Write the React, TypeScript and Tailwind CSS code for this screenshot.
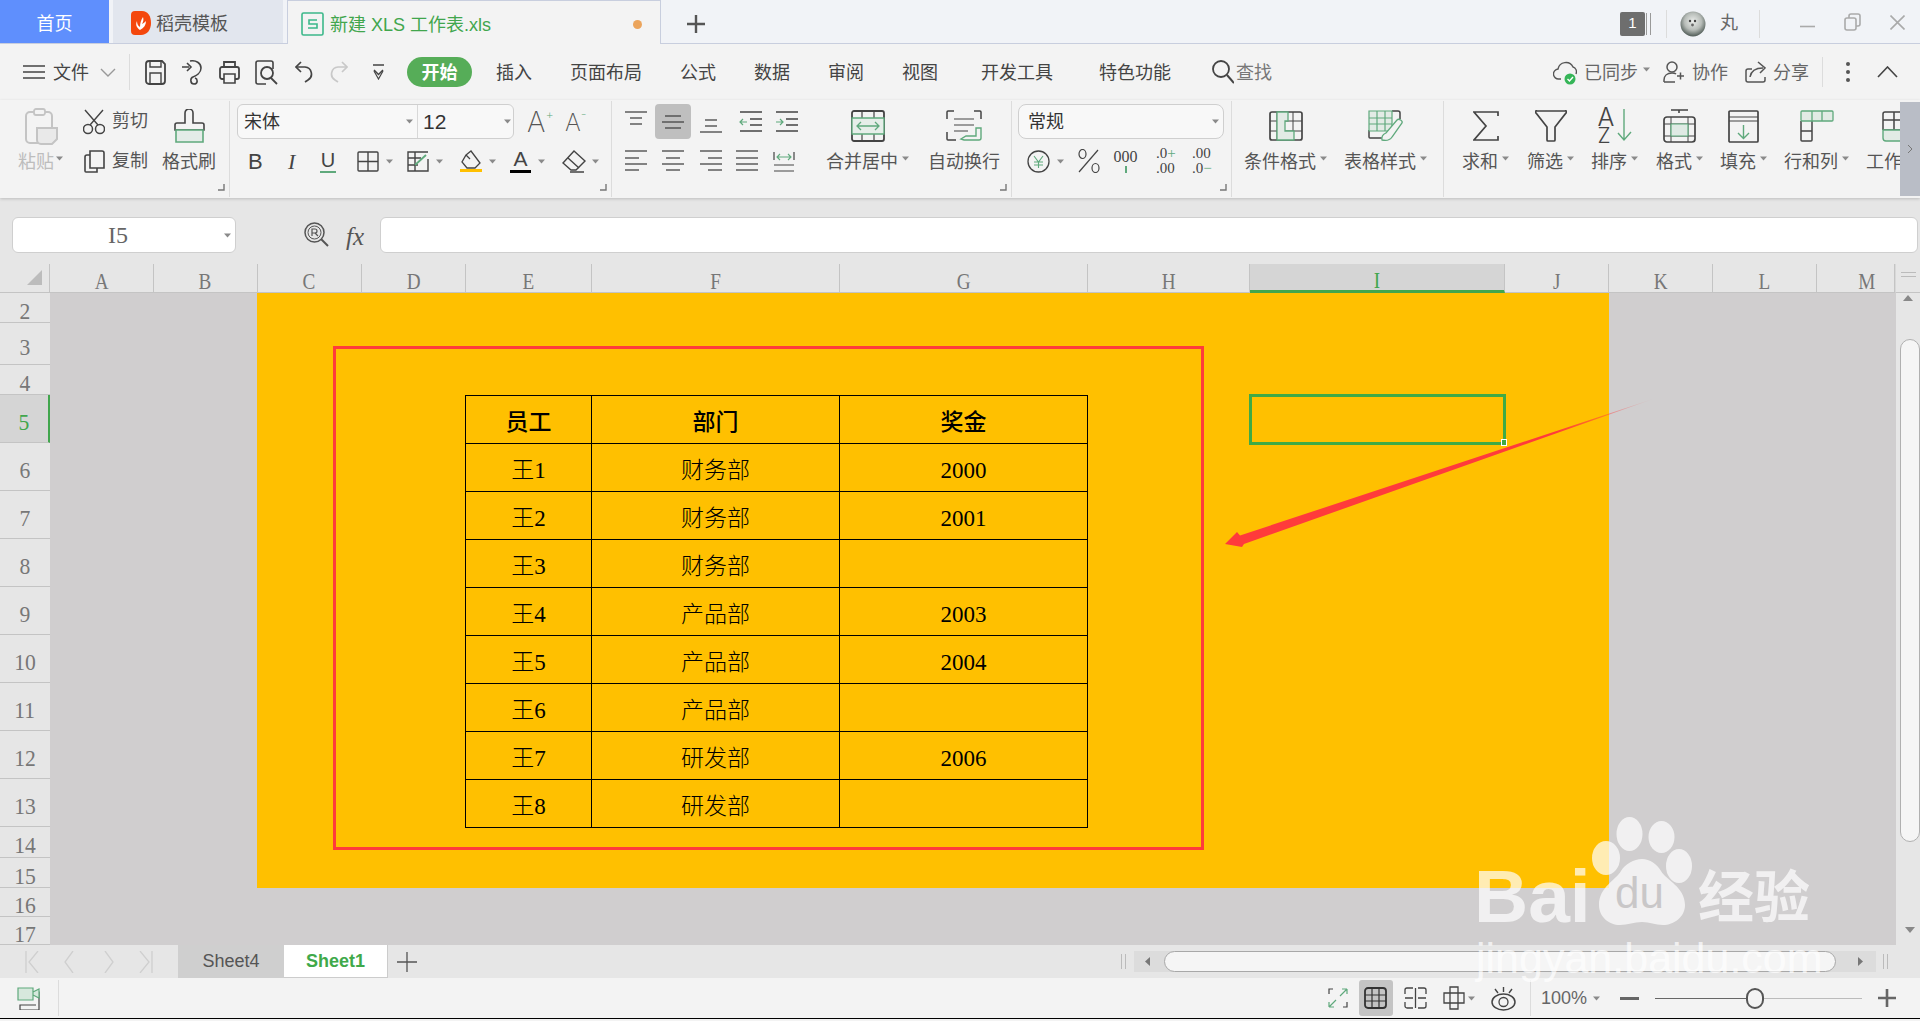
import React from 'react';

const UI = { fontFamily: '"Liberation Sans", "Noto Sans CJK SC", sans-serif' };
const SONG = { fontFamily: '"Liberation Serif", "Noto Sans CJK SC", serif' };
const THIN = { fontFamily: 'Inter, "Liberation Sans", sans-serif' };

const GREEN = '#5fa97c';

const Ic: React.FC<{ w: number; h: number; className?: string; children: React.ReactNode }> = ({ w, h, className, children }) => (
  <svg width={w} height={h} viewBox={`0 0 ${w} ${h}`} fill="none" stroke="currentColor" strokeWidth={1.4} className={`shrink-0 ${className ?? 'text-[#444]'}`}>
    {children}
  </svg>
);

const Caret: React.FC<{ className?: string }> = ({ className }) => (
  <svg width={7} height={5} viewBox="0 0 7 5" className={`shrink-0 ${className ?? ''}`}>
    <path d="M0 0.5h7L3.5 4.5z" fill="#8a8a8a" />
  </svg>
);

const Sep: React.FC<{ className?: string }> = ({ className }) => <div className={`w-px bg-[#dcdcdc] shrink-0 ${className ?? ''}`} />;

const Corner = () => (
  <svg width={7} height={7} viewBox="0 0 7 7" className="absolute right-[4px] bottom-[6px]">
    <path d="M6 0v6H0" stroke="#777" strokeWidth={1.4} fill="none" />
  </svg>
);

const Big: React.FC<{ label: string; caret?: boolean; width: number; ml: number; children: React.ReactNode }> = ({ label, caret, width, ml, children }) => (
  <div className="flex flex-col items-center shrink-0" style={{ width, marginLeft: ml }}>
    <div className="h-[44px] flex items-center justify-center">{children}</div>
    <div className="h-[28px] flex items-center gap-[4px] whitespace-nowrap text-[18px] text-[#555]">
      <span>{label}</span>
      {caret && <Caret className="-mt-[8px]" />}
    </div>
  </div>
);

// top menu row icons
const IconMenu = () => <Ic w={22} h={16}><path d="M0 2h22M0 8h22M0 14h22" strokeWidth={1.6} /></Ic>;
const IconSave = () => (
  <Ic w={21} h={25}>
    <path d="M4 1h13l3 3v17a3 3 0 0 1-3 3H4a3 3 0 0 1-3-3V4a3 3 0 0 1 3-3z" strokeWidth={1.8} />
    <path d="M5 1v6h11V1M5 24V13h11v11" strokeWidth={1.4} />
  </Ic>
);
const IconRoute = () => (
  <Ic w={20} h={25}>
    <path d="M0 7h7M5 3l4 4-4 4M8 1c6-1 11 2 11 7s-5 8-8 9c-3 1-3 7 1 7s4-5 1-6" strokeWidth={1.6} />
  </Ic>
);
const IconPrint = () => (
  <Ic w={21} h={25}>
    <path d="M5 7V2h11v5M5 19H3a2 2 0 0 1-2-2V9a2 2 0 0 1 2-2h15a2 2 0 0 1 2 2v8a2 2 0 0 1-2 2h-2" strokeWidth={1.8} />
    <path d="M5 14h11v9H5z" strokeWidth={1.6} />
  </Ic>
);
const IconPreview = () => (
  <Ic w={23} h={25}>
    <path d="M11 24H3a2 2 0 0 1-2-2V3a2 2 0 0 1 2-2h13a2 2 0 0 1 2 2v6" strokeWidth={1.6} />
    <circle cx={12} cy={13} r={6} strokeWidth={1.8} />
    <path d="M16 18l6 6" strokeWidth={1.8} />
  </Ic>
);
const IconUndo = ({ cls }: { cls?: string }) => (
  <Ic w={18} h={22} className={cls}>
    <path d="M6 1L1 6l5 5" strokeWidth={1.7} />
    <path d="M1 6h9a7 7 0 0 1 3 13l-3 2" strokeWidth={1.7} />
  </Ic>
);
const IconDrop = () => (
  <Ic w={11} h={16}>
    <path d="M0 1h11M1 6l4.5 4.5L10 6" strokeWidth={1.5} />
    <path d="M1 7l4.5 8L10 7" strokeWidth={1.2} />
  </Ic>
);
const IconSearch = () => (
  <Ic w={22} h={24}>
    <circle cx={9} cy={9} r={8} strokeWidth={1.8} />
    <path d="M15 15l7 8" strokeWidth={2} />
  </Ic>
);
const IconCloud = () => (
  <Ic w={24} h={26} className="text-[#555]">
    <path d="M8 20H6a5 5 0 0 1-1-10 8 8 0 0 1 15-2c3 1 4 4 3 7" strokeWidth={1.4} />
    <circle cx={17} cy={20} r={5.5} fill="#35b558" stroke="none" />
    <path d="M14.5 20l2 2 3.5-4" stroke="#fff" strokeWidth={1.4} />
  </Ic>
);
const IconUser = () => (
  <Ic w={21} h={22} className="text-[#555]">
    <circle cx={9} cy={6} r={5} strokeWidth={1.5} />
    <path d="M1 21v-2c0-4 3-7 8-7 2 0 3 0 4 1M1 21h11M14 15h7M17.500 11.500v7" strokeWidth={1.5} />
  </Ic>
);
const IconShare = () => (
  <Ic w={21} h={22} className="text-[#555]">
    <path d="M7 8H3a2 2 0 0 0-2 2v9a2 2 0 0 0 2 2h15a2 2 0 0 0 2-2v-3M5 16c1-6 5-9 13-9M13 1l7 6-5 5" strokeWidth={1.5} />
  </Ic>
);

// ribbon icons
const IconPaste = () => (
  <Ic w={33} h={37} className="text-[#c4c4c4]">
    <rect x={1} y={4} width={26} height={31} rx={4} strokeWidth={2} />
    <rect x={9} y={1} width={11} height={6} rx={2} fill="#f3f3f3" strokeWidth={1.8} />
    <path d="M12 20h20v11l-5 5H16a4 4 0 0 1-4-4z" fill="#e9e9e9" strokeWidth={2} />
  </Ic>
);
const IconScissors = () => (
  <Ic w={22} h={26}>
    <circle cx={5} cy={20} r={4.5} strokeWidth={1.5} />
    <circle cx={17} cy={20} r={4.5} strokeWidth={1.5} />
    <path d="M7 16L20 1M15 16L2 1" strokeWidth={1.4} />
  </Ic>
);
const IconCopy = () => (
  <Ic w={21} h={23}>
    <path d="M6 1h12a2 2 0 0 1 2 2v15H6z" strokeWidth={1.6} />
    <path d="M6 5H3a2 2 0 0 0-2 2v14a1 1 0 0 0 1 1h11v-4" strokeWidth={1.6} />
  </Ic>
);
const IconBrush = () => (
  <Ic w={31} h={35}>
    <path d="M11 14V4a4 4 0 0 1 8 0v10h9a2 2 0 0 1 2 2v5H1v-5a2 2 0 0 1 2-2z" strokeWidth={1.6} />
    <path d="M2 21h27v12H2z" fill="#e4ece8" stroke={GREEN} strokeWidth={1.6} />
  </Ic>
);
const IconBorders = () => (
  <Ic w={22} h={21}>
    <rect x={1} y={1} width={20} height={19} rx={1} />
    <path d="M11 1v19M1 10.500h20" />
  </Ic>
);
const IconBorders2 = () => (
  <Ic w={22} h={21}>
    <path d="M21 8v12H1V1h20" />
    <path d="M1 7h13M1 14h10M8 1v19" />
    <path d="M8 14l11-10" stroke={GREEN} strokeWidth={1.8} />
  </Ic>
);
const IconFill = () => (
  <svg width={22} height={23} viewBox="0 0 22 23" fill="none" stroke="#444" strokeWidth={1.3} className="shrink-0">
    <path d="M6 5l5-4 9 12-5 5H7l-5-6z" />
    <path d="M6 5l4 4" />
    <rect x={0} y={19} width={22} height={3} fill="#ffc000" stroke="none" />
  </svg>
);
const IconEraser = () => (
  <Ic w={24} h={23}>
    <path d="M12 1l11 10-9 9H9L1 13z" />
    <path d="M6 8l11 10M8 22h14" />
  </Ic>
);
const Lines: React.FC<{ rows: [number, number, number][] }> = ({ rows }) => (
  <Ic w={22} h={22}>
    {rows.map(([x1, x2, y], i) => (
      <path key={i} d={`M${x1} ${y}H${x2}`} strokeWidth={1.3} />
    ))}
  </Ic>
);
const IndentL = () => (
  <Ic w={23} h={21}>
    <path d="M1 1h22M11 8h12M11 14h12M1 20h22" strokeWidth={1.3} />
    <path d="M8 11H1M4 8l-3 3 3 3" stroke={GREEN} strokeWidth={1.2} />
  </Ic>
);
const IndentR = () => (
  <Ic w={23} h={21}>
    <path d="M1 1h22M11 8h12M11 14h12M1 20h22" strokeWidth={1.3} />
    <path d="M1 11h7M5 8l3 3-3 3" stroke={GREEN} strokeWidth={1.2} />
  </Ic>
);
const IconSpread = () => (
  <Ic w={22} h={21}>
    <path d="M1 1v8M21 1v8M1 14h20M1 20h20" strokeWidth={1.2} />
    <path d="M4 6h14M7 3L4 6l3 3M15 3l3 3-3 3" stroke={GREEN} strokeWidth={1.1} />
  </Ic>
);
const IconMerge = () => (
  <Ic w={34} h={32}>
    <rect x={1} y={1} width={32} height={30} rx={2} strokeWidth={1.8} />
    <path d="M11 1v7M23 1v7M11 24v7M23 24v7" strokeWidth={1.2} />
    <path d="M1 8h32v16H1z" fill="#e6eee9" stroke={GREEN} strokeWidth={1.3} />
    <path d="M6 16h22M10 12l-4 4 4 4M24 12l4 4-4 4" stroke={GREEN} strokeWidth={1.3} />
  </Ic>
);
const IconWrap = () => (
  <Ic w={36} h={32}>
    <path d="M8 1H2a1 1 0 0 0-1 1v7M28 1h6a1 1 0 0 1 1 1v7M1 22v7a1 1 0 0 0 1 1h8" strokeWidth={1.5} />
    <path d="M8 9h20M8 15h20M8 21h14" strokeWidth={1.2} />
    <path d="M35 18v10a2 2 0 0 1-2 2H18l-3-1 5-3h10v-8z" stroke={GREEN} strokeWidth={1.4} />
  </Ic>
);
const IconYen = () => (
  <Ic w={23} h={23}>
    <circle cx={11.5} cy={11.500} r={10.500} strokeWidth={1.3} />
    <path d="M7 6l4.500 6L16 6M11.500 12v6M7 12h9M7 15h9" stroke={GREEN} strokeWidth={1.1} />
  </Ic>
);
const IconPercent = () => (
  <Ic w={22} h={24}>
    <ellipse cx={4.5} cy={5} rx={3.500} ry={4.500} strokeWidth={1.2} />
    <ellipse cx={17.500} cy={19} rx={3.500} ry={4.500} strokeWidth={1.2} />
    <path d="M20 1L1 23" strokeWidth={1.2} />
  </Ic>
);
const IconCond = () => (
  <Ic w={34} h={30}>
    <rect x={1} y={1} width={32} height={28} rx={2} strokeWidth={1.7} />
    <path d="M1 10h32M1 20h32M8 1v28M24 1v28" strokeWidth={1} />
    <path d="M8 1h11v9h-3v10h9v9H8z" fill="#e2ebe5" stroke={GREEN} strokeWidth={1.3} />
  </Ic>
);
const IconTable = () => (
  <Ic w={36} h={33}>
    <path d="M24 1h6a2 2 0 0 1 2 2v6M1 20v7a1 1 0 0 0 1 1h14" strokeWidth={1.5} />
    <path d="M1 1h23v20H1zM1 8h23M1 14h23M9 1v20M17 1v20" fill="#e2ebe5" stroke={GREEN} strokeWidth={1.2} />
    <path d="M14 30c-1-5 2-6 4-7l11-13c2-2 6 1 5 3L24 27c-2 3-6 4-10 3z" fill="#f3f3f3" stroke={GREEN} strokeWidth={1.3} />
  </Ic>
);
const IconSum = () => <Ic w={26} h={30}><path d="M25 5V1H1l12 14L1 29h24v-4" strokeWidth={1.7} /></Ic>;
const IconFilter = () => <Ic w={32} h={32}><path d="M2 1h28a1 1 0 0 1 1 2L20 17v13a1 1 0 0 1-1 1h-6a1 1 0 0 1-1-1V17L1 3a1 1 0 0 1 1-2z" strokeWidth={1.7} /></Ic>;
const IconSort = () => (
  <div className="w-[34px] h-[38px] flex text-[#444] font-light" style={THIN}>
    <div className="w-[19px] flex flex-col items-start">
      <span className="text-[25px] leading-[20px] h-[20px]">A</span>
      <span className="text-[21px] leading-[18px] h-[18px]">Z</span>
    </div>
    <Ic w={15} h={38} className="text-[#5fa97c]"><path d="M7 2v31M1 26l6 7 7-8" strokeWidth={1.4} /></Ic>
  </div>
);
const IconFormat = () => (
  <Ic w={33} h={34}>
    <path d="M8 1h17M16 1v3" strokeWidth={1.6} />
    <rect x={1} y={8} width={31} height={25} rx={3} strokeWidth={1.7} />
    <path d="M1 15h31M1 27h31M8 8v25M25 8v25" strokeWidth={1} />
    <path d="M8 15h17v12H8z" fill="#dfeae4" stroke={GREEN} strokeWidth={1.2} />
  </Ic>
);
const IconFillDown = () => (
  <Ic w={31} h={33}>
    <rect x={1} y={1} width={29} height={31} rx={1} strokeWidth={1.7} />
    <path d="M1 7h29M1 11h29" strokeWidth={1.1} />
    <path d="M15.500 15v13M10 23l5.500 5.500L21 23" stroke={GREEN} strokeWidth={1.4} />
  </Ic>
);
const IconRowCol = () => (
  <Ic w={34} h={32}>
    <path d="M1 11v19a1 1 0 0 0 1 1h9a1 1 0 0 0 1-1V11M1 21h11" strokeWidth={1.5} />
    <path d="M2 1h30a1 1 0 0 1 1 1v8a1 1 0 0 1-1 1H2a1 1 0 0 1-1-1V2a1 1 0 0 1 1-1zM12 1v10M22 1v10" fill="#e2ebe5" stroke={GREEN} strokeWidth={1.3} />
  </Ic>
);
const IconSheet = () => (
  <Ic w={34} h={32}>
    <path d="M34 2H3a2 2 0 0 0-2 2v16M1 10h33M1 20h33M12 2v18" strokeWidth={1.5} />
    <path d="M34 20H1v8a3 3 0 0 0 3 3h30" fill="#e2ebe5" stroke={GREEN} strokeWidth={1.4} />
  </Ic>
);

const TabBar = () => (
  <div className="h-[44px] flex bg-[#f1f3f7] border-b border-[#c8cede] text-[18px]">
    <div className="w-[109px] pt-[6px] bg-[#5f8ffd] text-white flex items-center justify-center">首页</div>
    <div className="w-[170px] pt-[6px] ml-[4px] bg-[#e2e6ee] flex items-center pl-[18px] text-[#555]">
      <svg width={20} height={24} viewBox="0 0 20 24" className="shrink-0 -mt-[3px]">
        <path d="M4 0h7c6 0 9 5 9 12s-4 12-10 12H4a4 4 0 0 1-4-4V4a4 4 0 0 1 4-4z" fill="#f4470d" />
        <path d="M9 19c-3-2-5-5-3-9 0 3 1 5 3 6 0-4 1-7 3-10 1 3 0 5-1 7 2-1 3-2 4-3 0 4-2 7-6 9z" fill="#fff" />
      </svg>
      <span className="ml-[5px]">稻壳模板</span>
    </div>
    <div className="w-[374px] pt-[6px] ml-[4px] h-[44px] bg-[#f3f3f3] border-x border-t border-[#c8cede] flex items-center pl-[13px] text-[#41a64d]">
      <svg width={23} height={24} viewBox="0 0 23 24" fill="none" className="shrink-0 -mt-[3px]">
        <rect x={1} y={1} width={21} height={22} rx={1.5} stroke="#3cb88a" strokeWidth={1.6} />
        <path d="M16 8H8v4h8v4H7" stroke="#3cb88a" strokeWidth={1.6} />
      </svg>
      <span className="ml-[6px] whitespace-nowrap">新建 XLS 工作表.xls</span>
      <span className="ml-auto mr-[18px] -mt-[3px] w-[9px] h-[9px] rounded-full bg-[#eba45c]" />
    </div>
    <svg width={20} height={20} viewBox="0 0 20 20" className="ml-[25px] mt-[14px] shrink-0 text-[#555]" stroke="currentColor" strokeWidth={2.400}>
      <path d="M10 1v18M1 10h18" />
    </svg>
    <div className="flex-1" />
    <div className="flex items-center pt-[4px]">
      <div className="w-[25px] h-[24px] bg-[#6e6e6e] rounded-[2px] text-white text-[15px] flex items-center justify-center">1</div>
      <div className="w-[5px] h-[22px] ml-[1px] border-x border-[#999]" />
      <Sep className="h-[28px] ml-[15px]" />
      <svg width={26} height={26} viewBox="0 0 26 26" className="ml-[13px] shrink-0">
        <defs>
          <radialGradient id="av" cx="50%" cy="40%" r="62%">
            <stop offset="0%" stopColor="#eceeec" />
            <stop offset="55%" stopColor="#b7bcb8" />
            <stop offset="100%" stopColor="#46524d" />
          </radialGradient>
        </defs>
        <circle cx={13} cy={13} r={12.500} fill="url(#av)" />
        <circle cx={10} cy={10} r={1.200} fill="#444" />
        <circle cx={15} cy={10} r={1.200} fill="#444" />
        <circle cx={12.500} cy={14} r={1.400} fill="#666" />
      </svg>
      <span className="ml-[14px] text-[#666] w-[18px]">丸</span>
      <Sep className="h-[28px] ml-[21px]" />
      <Ic w={15} h={3} className="text-[#aaa] ml-[40px] mt-[6px]"><path d="M0 1.500h15" strokeWidth={1.6} /></Ic>
      <Ic w={17} h={18} className="text-[#aaa] ml-[29px] -mt-[4px]">
        <rect x={1} y={5} width={11} height={12} rx={2} strokeWidth={1.6} />
        <path d="M5 5V3a2 2 0 0 1 2-2h7a2 2 0 0 1 2 2v8a2 2 0 0 1-2 2h-2" strokeWidth={1.6} />
      </Ic>
      <Ic w={15} h={15} className="text-[#aaa] ml-[29px] mr-[15px] -mt-[2px]"><path d="M0.500 0.500l14 14M14.500 0.500l-14 14" strokeWidth={1.6} /></Ic>
    </div>
  </div>
);

const tabs: [string, number][] = [['插入', 24], ['页面布局', 38], ['公式', 38], ['数据', 38], ['审阅', 38], ['视图', 38], ['开发工具', 43], ['特色功能', 46]];

const MenuRow = () => (
  <div className="h-[56px] flex items-center pl-[23px] text-[18px] text-[#444] whitespace-nowrap [&>span]:pt-[3px]">
    <IconMenu />
    <span className="ml-[8px]">文件</span>
    <Ic w={16} h={9} className="text-[#999] ml-[11px]"><path d="M1 1l7 7 7-7" strokeWidth={1.4} /></Ic>
    <Sep className="h-[36px] ml-[13px] bg-[#cfcfcf]" />
    <div className="ml-[15px]"><IconSave /></div>
    <div className="ml-[16px]"><IconRoute /></div>
    <div className="ml-[17px]"><IconPrint /></div>
    <div className="ml-[15px]"><IconPreview /></div>
    <div className="ml-[17px]"><IconUndo /></div>
    <div className="ml-[17px] -scale-x-100"><IconUndo cls="text-[#c8c8c8]" /></div>
    <div className="ml-[25px]"><IconDrop /></div>
    <div className="ml-[23px] w-[65px] h-[30px] pt-[2px] rounded-full bg-[#56ad58] text-white font-bold flex items-center justify-center">开始</div>
    {tabs.map(([t, ml]) => (
      <span key={t} style={{ marginLeft: ml }}>{t}</span>
    ))}
    <div className="ml-[41px]"><IconSearch /></div>
    <span className="ml-[2px] text-[#777]">查找</span>
    <div className="flex-1" />
    <IconCloud />
    <span className="ml-[7px] text-[#666]">已同步</span>
    <Caret className="ml-[5px] -mt-[6px]" />
    <div className="ml-[13px]"><IconUser /></div>
    <span className="ml-[8px] text-[#666]">协作</span>
    <div className="ml-[17px]"><IconShare /></div>
    <span className="ml-[7px] text-[#666]">分享</span>
    <Sep className="h-[30px] ml-[13px]" />
    <div className="ml-[23px] w-[4px] h-[20px] flex flex-col justify-between items-center">
      <span className="w-[4px] h-[4px] rounded-full bg-[#555]" />
      <span className="w-[4px] h-[4px] rounded-full bg-[#555]" />
      <span className="w-[4px] h-[4px] rounded-full bg-[#555]" />
    </div>
    <Ic w={21} h={12} className="text-[#444] ml-[27px] mr-[22px]"><path d="M1 11L10.500 1 20 11" strokeWidth={1.6} /></Ic>
  </div>
);

const Row1: React.FC<{ children: React.ReactNode }> = ({ children }) => <div className="h-[35px] flex items-center whitespace-nowrap">{children}</div>;
const Row2: React.FC<{ children: React.ReactNode }> = ({ children }) => <div className="h-[34px] mt-[5px] flex items-center whitespace-nowrap">{children}</div>;

const Ribbon = () => (
  <div className="h-[98px] flex text-[18px] text-[#555] whitespace-nowrap relative z-10 shadow-[0_1px_3px_rgba(0,0,0,0.18)] bg-[#f3f3f3]">
    {/* clipboard */}
    <div className="w-[230px] shrink-0 relative flex pt-[3px] border-r border-[#dcdcdc] my-[1px]">
      <div className="ml-[18px] w-[44px] flex flex-col">
        <div className="h-[44px] flex items-center pl-[7px]"><IconPaste /></div>
        <div className="h-[28px] flex items-center text-[#bdbdbd] gap-[2px]"><span>粘贴</span><Caret className="-mt-[8px]" /></div>
      </div>
      <div className="ml-[21px] w-[64px] flex flex-col">
        <div className="h-[35px] flex items-center"><IconScissors /><span className="ml-[7px]">剪切</span></div>
        <div className="h-[34px] mt-[5px] flex items-center pl-[1px]"><IconCopy /><span className="ml-[7px]">复制</span></div>
      </div>
      <Big label="格式刷" width={54} ml={15}><IconBrush /></Big>
      <Corner />
    </div>
    {/* font */}
    <div className="w-[382px] shrink-0 relative flex flex-col pt-[3px] border-r border-[#dcdcdc] my-[1px]">
      <Row1>
        <div className="ml-[7px] w-[277px] h-[35px] bg-[#f8f8f8] border border-[#cfcfcf] rounded-[6px] flex items-center shrink-0">
          <span className="ml-[6px] pt-[2px] text-[#333]">宋体</span>
          <Caret className="ml-[126px]" />
          <div className="ml-[4px] w-px h-full bg-[#d8d8d8]" />
          <span className="ml-[5px] text-[21px] text-[#333]" style={UI}>12</span>
          <Caret className="ml-[58px]" />
        </div>
        <div className="ml-[13px] w-[25px] h-[30px] flex items-start text-[#555] font-extralight" style={THIN}>
          <span className="text-[28px] leading-[30px]">A</span>
          <span className="text-[13px] leading-[14px] text-[#5fa97c]">+</span>
        </div>
        <div className="ml-[13px] w-[24px] h-[30px] flex items-start text-[#555] font-extralight" style={THIN}>
          <span className="text-[24px] leading-[32px]">A</span>
          <span className="text-[13px] leading-[14px] text-[#5fa97c]">-</span>
        </div>
      </Row1>
      <Row2>
        <span className="ml-[18px] w-[13px] text-[22px] text-[#444]" style={UI}>B</span>
        <span className="ml-[27px] w-[9px] text-[22px] italic text-[#444]" style={SONG}>I</span>
        <span className="ml-[23px] w-[16px] flex flex-col items-center text-[20px] leading-[20px] text-[#444]">
          U<span className="w-[16px] h-[2px] bg-[#5fa97c] mt-[1px]" />
        </span>
        <div className="ml-[21px]"><IconBorders /></div>
        <Caret className="ml-[7px]" />
        <div className="ml-[14px]"><IconBorders2 /></div>
        <Caret className="ml-[7px]" />
        <div className="ml-[17px]"><IconFill /></div>
        <Caret className="ml-[7px]" />
        <span className="ml-[14px] w-[21px] flex flex-col items-center text-[21px] leading-[20px] text-[#444]">
          A<span className="w-[21px] h-[3px] bg-black mt-[1px]" />
        </span>
        <Caret className="ml-[7px]" />
        <div className="ml-[17px]"><IconEraser /></div>
        <Caret className="ml-[6px]" />
      </Row2>
      <Corner />
    </div>
    {/* alignment */}
    <div className="w-[400px] shrink-0 relative flex pt-[3px] border-r border-[#dcdcdc] my-[1px]">
      <div className="w-[208px] flex flex-col">
        <Row1>
          <div className="ml-[13px]"><Lines rows={[[0, 22, 1], [5, 17, 7], [5, 17, 13]]} /></div>
          <div className="ml-[8px] w-[36px] h-[35px] bg-[#bfbfbf] rounded-[4px] flex items-center justify-center"><Lines rows={[[3, 19, 5], [0, 22, 11], [3, 19, 17]]} /></div>
          <div className="ml-[9px]"><Lines rows={[[5, 17, 9], [5, 17, 15], [0, 22, 21]]} /></div>
          <div className="ml-[17px]"><IndentL /></div>
          <div className="ml-[13px]"><IndentR /></div>
        </Row1>
        <Row2>
          <div className="ml-[13px]"><Lines rows={[[0, 22, 1], [0, 14, 8], [0, 22, 14], [0, 14, 20]]} /></div>
          <div className="ml-[15px]"><Lines rows={[[0, 22, 1], [4, 18, 8], [0, 22, 14], [4, 18, 20]]} /></div>
          <div className="ml-[16px]"><Lines rows={[[0, 22, 1], [8, 22, 8], [0, 22, 14], [8, 22, 20]]} /></div>
          <div className="ml-[14px]"><Lines rows={[[0, 22, 1], [0, 22, 8], [0, 22, 14], [0, 22, 20]]} /></div>
          <div className="ml-[15px]"><IconSpread /></div>
        </Row2>
      </div>
      <Big label="合并居中" caret width={83} ml={6}><IconMerge /></Big>
      <Big label="自动换行" width={72} ml={19}><IconWrap /></Big>
      <Corner />
    </div>
    {/* number */}
    <div className="w-[220px] shrink-0 relative flex flex-col pt-[3px] border-r border-[#dcdcdc] my-[1px]">
      <Row1>
        <div className="ml-[6px] w-[206px] h-[35px] bg-[#f8f8f8] border border-[#cfcfcf] rounded-[8px] flex items-center justify-between pl-[9px] pr-[4px] shrink-0">
          <span className="pt-[2px] text-[#333]">常规</span>
          <Caret />
        </div>
      </Row1>
      <Row2>
        <div className="ml-[15px]"><IconYen /></div>
        <Caret className="ml-[7px]" />
        <div className="ml-[14px]"><IconPercent /></div>
        <div className="ml-[15px] w-[21px] flex flex-col items-center leading-none text-[16px] text-[#444]" style={SONG}>
          <span className="leading-[14px]">000</span>
          <span className="w-[2px] h-[7px] bg-[#5fa97c] mt-[2px]" />
        </div>
        <div className="ml-[20px] w-[20px] flex flex-col leading-[15px] text-[15px] text-[#444]" style={SONG}>
          <span>.0<span className="text-[#5fa97c]">+</span></span>
          <span>.00</span>
        </div>
        <div className="ml-[16px] w-[20px] flex flex-col leading-[15px] text-[15px] text-[#444]" style={SONG}>
          <span>.00</span>
          <span>.0<span className="text-[#5fa97c]">−</span></span>
        </div>
      </Row2>
      <Corner />
    </div>
    {/* styles */}
    <div className="w-[212px] shrink-0 relative flex pt-[3px] border-r border-[#dcdcdc] my-[1px]">
      <Big label="条件格式" caret width={83} ml={12}><IconCond /></Big>
      <Big label="表格样式" caret width={83} ml={17}><IconTable /></Big>
    </div>
    {/* cells */}
    <div className="flex-1 min-w-0 overflow-hidden flex pt-[3px] my-[1px]">
      <Big label="求和" caret width={47} ml={18}><IconSum /></Big>
      <Big label="筛选" caret width={47} ml={18}><IconFilter /></Big>
      <Big label="排序" caret width={47} ml={17}><IconSort /></Big>
      <Big label="格式" caret width={47} ml={18}><IconFormat /></Big>
      <Big label="填充" caret width={47} ml={17}><IconFillDown /></Big>
      <Big label="行和列" caret width={65} ml={17}><IconRowCol /></Big>
      <Big label="工作表" caret width={65} ml={17}><IconSheet /></Big>
    </div>
    <div className="w-[20px] shrink-0 my-[2px] bg-[#b9bdc6] flex items-center justify-center">
      <Ic w={6} h={10} className="text-[#777]"><path d="M1 1l4 4-4 4" strokeWidth={1} /></Ic>
    </div>
  </div>
);

const FormulaBar = () => (
  <div className="h-[66px] bg-[#e6e6e6] flex items-start pt-[19px]">
    <div className="ml-[12px] w-[224px] h-[36px] bg-white border border-[#cfcfcf] rounded-[6px] flex items-center relative">
      <span className="w-full pr-[28px] pl-[16px] text-center text-[24px] text-[#666]" style={SONG}>I5</span>
      <Caret className="absolute right-[4px] top-[15px]" />
    </div>
    <svg width={25} height={25} viewBox="0 0 25 25" fill="none" stroke="#555" strokeWidth={1.5} className="ml-[68px] mt-[5px] shrink-0">
      <circle cx={10.500} cy={10.500} r={9.500} />
      <circle cx={10.500} cy={10.500} r={6.500} strokeWidth={1} />
      <path d="M8 14V7h3a2 2 0 0 1 0 4H8M11 11l3 3" strokeWidth={1.2} />
      <path d="M17 17l7 7" strokeWidth={2} />
    </svg>
    <span className="ml-[17px] mt-[1px] w-[22px] text-[25px] italic text-[#555]" style={SONG}>fx</span>
    <div className="ml-[12px] mr-[2px] flex-1 h-[36px] bg-white border border-[#cfcfcf] rounded-[6px]" />
  </div>
);

const cols: [string, number][] = [['A', 104], ['B', 104], ['C', 104], ['D', 104], ['E', 126], ['F', 248], ['G', 248], ['H', 162], ['I', 255], ['J', 104], ['K', 104], ['L', 104], ['M', 78]];

const ColHeader = () => (
  <div className="h-[29px] flex bg-[#e6e6e6] text-[24px] text-[#777]" style={SONG}>
    <div className="w-[50px] shrink-0 border-r border-b border-[#c4c4c4] relative">
      <svg width={16} height={16} viewBox="0 0 16 16" className="absolute right-[6px] bottom-[6px]"><path d="M15 0v15H0z" fill="#bcbcbc" /></svg>
    </div>
    {cols.map(([c, w]) => (
      <div
        key={c}
        style={{ width: w }}
        className={`shrink-0 flex items-center pt-[5px] leading-none border-r ${c === 'M' ? 'justify-end pr-[17px]' : 'justify-center'} ${c === 'I' ? 'bg-[#d5d5d5] text-[#41a64d] border-b-[3px] border-b-[#41a64d] border-r-[#c4c4c4]' : 'border-b border-[#c4c4c4]'}`}
      >
        <span className="scale-x-[0.8]">{c}</span>
      </div>
    ))}
    <div className="flex-1 border-b border-[#c4c4c4] border-l border-l-[#d8d8d8] flex justify-center pt-[8px]">
      <div className="w-[15px] h-[5px] border-y border-[#bbb]" />
    </div>
  </div>
);

const rowHeights: [number, number][] = [[2, 30], [3, 42], [4, 30], [5, 48], [6, 48], [7, 48], [8, 48], [9, 48], [10, 48], [11, 48], [12, 48], [13, 48], [14, 31], [15, 30], [16, 29], [17, 28]];

const RowHeader = () => (
  <div className="w-[50px] shrink-0 bg-[#e6e6e6] text-[24px] leading-none text-[#777]" style={SONG}>
    {rowHeights.map(([n, h]) => (
      <div
        key={n}
        style={{ height: h }}
        className={`flex items-center justify-center pt-[6px] border-b border-[#c4c4c4] ${n === 5 ? 'bg-[#d5d5d5] text-[#41a64d] border-r-2 border-r-[#41a64d]' : ''}`}
      >
        <span className="scale-x-[0.9]">{n}</span>
      </div>
    ))}
  </div>
);

const data = [
  ['王1', '财务部', '2000'],
  ['王2', '财务部', '2001'],
  ['王3', '财务部', ''],
  ['王4', '产品部', '2003'],
  ['王5', '产品部', '2004'],
  ['王6', '产品部', ''],
  ['王7', '研发部', '2006'],
  ['王8', '研发部', ''],
];

const Sheet = () => (
  <div className="flex-1 relative bg-[#d0cecf] overflow-hidden">
    <div className="ml-[207px] w-[1352px] h-[595px] bg-[#ffc000] pt-[53px] pl-[76px]">
      <div className="w-[871px] h-[504px] border-[3px] border-[#ff3b3b] pt-[46px] pl-[129px]">
        <table className="border-collapse text-[23px] text-black font-light leading-none" style={SONG}>
          <colgroup>
            <col className="w-[126px]" />
            <col className="w-[248px]" />
            <col className="w-[248px]" />
          </colgroup>
          <tbody>
            <tr className="h-[48px] font-medium">
              {['员工', '部门', '奖金'].map((t) => (
                <td key={t} className="border border-black text-center pt-[6px] pb-0 px-0">{t}</td>
              ))}
            </tr>
            {data.map((r) => (
              <tr key={r[0]} className="h-[48px]">
                {r.map((t, i) => (
                  <td key={i} className="border border-black text-center pt-[6px] pb-0 px-0">{t}</td>
                ))}
              </tr>
            ))}
          </tbody>
        </table>
      </div>
    </div>
    {/* selected cell */}
    <div className="absolute left-[1199px] top-[101px] w-[257px] h-[51px] border-[3px] border-[#3faa46]">
      <div className="absolute -right-[4px] -bottom-[4px] w-[6px] h-[7px] bg-[#3faa46] border border-white" />
    </div>
  </div>
);

const VScroll = () => (
  <div className="w-[24px] shrink-0 bg-[#e6e6e6] flex flex-col items-center relative">
    <svg width={10} height={6} viewBox="0 0 10 6" className="mt-[2px]"><path d="M0 6L5 0l5 6z" fill="#888" /></svg>
    <div className="ml-[4px] mt-[38px] w-[20px] h-[503px] bg-[#f5f5f5] border border-[#b0b0b0] rounded-full" />
    <svg width={10} height={6} viewBox="0 0 10 6" className="ml-[4px] mt-[85px]"><path d="M0 0h10L5 6z" fill="#888" /></svg>
  </div>
);

const SheetBar = () => (
  <div className="h-[33px] bg-[#e6e6e6] flex items-center text-[18px]">
    <Ic w={14} h={22} className="text-[#cfcfcf] ml-[25px]"><path d="M1 0v22M13 0L4 11l9 11" strokeWidth={1.3} /></Ic>
    <Ic w={10} h={22} className="text-[#cfcfcf] ml-[25px]"><path d="M9 0L1 11l8 11" strokeWidth={1.3} /></Ic>
    <Ic w={10} h={22} className="text-[#cfcfcf] ml-[30px]"><path d="M1 0l8 11-8 11" strokeWidth={1.3} /></Ic>
    <Ic w={14} h={22} className="text-[#cfcfcf] ml-[25px]"><path d="M13 0v22M1 0l9 11-9 11" strokeWidth={1.3} /></Ic>
    <div className="ml-[25px] w-[106px] h-[33px] bg-[#cfcfcf] flex items-center justify-center text-[#555]" style={UI}>Sheet4</div>
    <div className="w-[104px] h-[33px] bg-white border-b border-r border-[#ccc] flex items-center justify-center text-[#3fa94a] font-bold" style={UI}>Sheet1</div>
    <Ic w={20} h={20} className="text-[#555] ml-[9px]"><path d="M10 0v20M0 10h20" strokeWidth={1.3} /></Ic>
    <div className="flex-1" />
    <div className="w-[5px] h-[15px] border-x border-[#bbb]" />
    <div className="ml-[8px] w-[742px] h-[21px] bg-[#dcdcdc] flex items-center">
      <svg width={5} height={9} viewBox="0 0 5 9" className="ml-[11px] shrink-0"><path d="M5 0v9L0 4.500z" fill="#777" /></svg>
      <div className="ml-[14px] w-[672px] h-[21px] bg-[#f5f5f5] border border-[#a8a8a8] rounded-full" />
      <svg width={5} height={9} viewBox="0 0 5 9" className="ml-[22px] shrink-0"><path d="M0 0v9l5-4.500z" fill="#777" /></svg>
    </div>
    <div className="ml-[7px] mr-[32px] w-[5px] h-[15px] border-x border-[#bbb]" />
  </div>
);

const StatusBar = () => (
  <div className="h-[41px] bg-[#f3f3f3] border-b border-black flex items-center">
    <Ic w={24} h={23} className="text-[#444] ml-[17px]">
      <path d="M19 5h3v18H3v-5h16M3 18v5" strokeWidth={1.2} />
      <path d="M1 1h15v12H1zM16 5l6-3v9l-6-3" fill="#d7e8dd" stroke={GREEN} strokeWidth={1.2} />
    </Ic>
    <Sep className="h-[36px] ml-[17px]" />
    <div className="flex-1" />
    <Ic w={20} h={20} className="text-[#444]">
      <path d="M5 1H1v5M15 19h4v-5" strokeWidth={1.2} />
      <path d="M12 8l7-7M19 1h-5M19 1v5M8 12l-7 7M1 19h5M1 19v-5" stroke={GREEN} strokeWidth={1.2} />
    </Ic>
    <div className="ml-[11px] w-[34px] h-[36px] bg-[#c4c4c4] rounded-[3px] flex items-center justify-center">
      <Ic w={23} h={22} className="text-[#333]">
        <rect x={1} y={1} width={21} height={20} rx={3} strokeWidth={1.8} />
        <path d="M8 1v20M15 1v20M1 8h21M1 14h21" strokeWidth={1.2} />
      </Ic>
    </div>
    <Ic w={23} h={22} className="text-[#444] ml-[11px]">
      <path d="M9 1H3a2 2 0 0 0-2 2v4M14 1h6a2 2 0 0 1 2 2v4M9 21H3a2 2 0 0 1-2-2v-4M14 21h6a2 2 0 0 0 2-2v-4M1 11h8M14 11h8M11.500 1v20" strokeWidth={1.3} />
    </Ic>
    <Ic w={22} h={24} className="text-[#444] ml-[16px]">
      <path d="M7 1h8v22H7zM1 7h20v10H1zM7 7h8M7 17h8" strokeWidth={1.3} />
    </Ic>
    <Caret className="ml-[3px]" />
    <Ic w={25} h={25} className="text-[#444] ml-[16px]">
      <ellipse cx={12.500} cy={16} rx={11.500} ry={8} strokeWidth={1.5} />
      <circle cx={12.500} cy={16} r={4.500} strokeWidth={1.3} />
      <path d="M12.500 1v5M4 3l3 4M21 3l-3 4" strokeWidth={1.4} />
    </Ic>
    <Sep className="h-[36px] ml-[14px]" />
    <span className="ml-[10px] text-[18px] text-[#666]" style={UI}>100%</span>
    <Caret className="ml-[6px]" />
    <div className="ml-[20px] w-[19px] h-[3px] bg-[#666]" />
    <div className="ml-[16px] w-[207px] h-[1px] bg-[#bbb] relative">
      <div className="w-[92px] h-full bg-[#666]" />
      <div className="absolute left-[91px] -top-[10px] w-[18px] h-[21px] bg-[#f3f3f3] border-2 border-[#555] rounded-full" />
    </div>
    <Ic w={18} h={18} className="text-[#666] ml-[16px] mr-[24px]"><path d="M9 0v18M0 9h18" strokeWidth={2.600} /></Ic>
  </div>
);

const Watermark = () => (
  <div className="absolute left-0 top-0 w-full h-full pointer-events-none text-white/70 font-bold" style={UI}>
    <span className="absolute left-[1474px] top-[856px] text-[75px] leading-[80px]">Bai</span>
    <svg width={1920} height={1021} className="absolute left-0 top-0" fill="rgba(255,255,255,0.7)">
      <ellipse cx={1606} cy={858} rx={14} ry={17} />
      <ellipse cx={1629.500} cy={834} rx={13} ry={17} />
      <ellipse cx={1661.500} cy={837} rx={13} ry={16} />
      <ellipse cx={1679} cy={866} rx={13} ry={17} />
      <path d="M1642 859c8 0 15 5 19 12 5 9 24 16 24 34 0 12-11 20-22 20-8 0-13-3-21-3s-14 3-22 3c-11 0-21-8-21-20 0-18 17-25 22-34 4-7 13-12 21-12z" />
    </svg>
    <span className="absolute left-[1615px] top-[868px] text-[44px] leading-[50px] font-normal text-[#c9c7c8]">du</span>
    <span className="absolute left-[1698px] top-[868px] text-[56px] leading-[60px]">经验</span>
    <span className="absolute left-[1476px] top-[935px] text-[43px] leading-[46px] font-normal">jingyan.baidu.com</span>
  </div>
);

const Arrow = () => (
  <svg width={1920} height={1021} className="absolute left-0 top-0 pointer-events-none">
    <defs>
      <linearGradient id="tail" gradientUnits="userSpaceOnUse" x1="1656" y1="398" x2="1560" y2="444">
        <stop offset="0%" stopColor="#ff3b3b" stopOpacity={0} />
        <stop offset="100%" stopColor="#ff3b3b" />
      </linearGradient>
    </defs>
    <path d="M1225 544L1237 532L1240 535.500L1656 398L1244 544L1242 547z" fill="url(#tail)" />
  </svg>
);

const App: React.FC = () => (
  <div className="relative w-[1920px] h-[1021px] overflow-hidden bg-[#f3f3f3] flex flex-col" style={UI}>
    <TabBar />
    <MenuRow />
    <Ribbon />
    <FormulaBar />
    <ColHeader />
    <div className="h-[652px] flex overflow-hidden">
      <RowHeader />
      <Sheet />
      <VScroll />
    </div>
    <SheetBar />
    <StatusBar />
    <Arrow />
    <Watermark />
  </div>
);

export default App;
